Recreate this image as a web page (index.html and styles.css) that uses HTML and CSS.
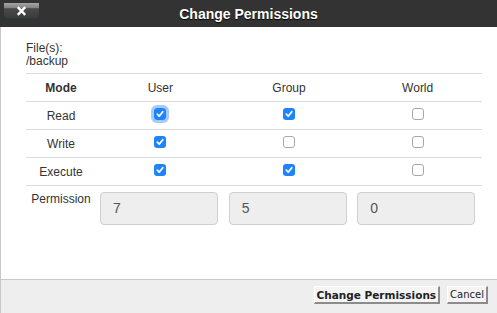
FILE: index.html
```html
<!DOCTYPE html>
<html lang="en">
<head>
<meta charset="utf-8">
<title>Change Permissions</title>
<link rel="stylesheet" href="styles.css">
</head>
<body>
<div class="dialog">
  <div class="titlebar">
    <button class="close" aria-label="Close">
      <svg width="11" height="10" viewBox="0 0 11 10"><path d="M1.8 1.2 L9.2 8.8 M9.2 1.2 L1.8 8.8" stroke="#fff" stroke-width="2.4" stroke-linecap="butt"/></svg>
    </button>
    <h1 class="title">Change Permissions</h1>
    <span></span>
  </div>
  <div class="frame">
    <div class="content">
      <div class="files">File(s):<br>/backup</div>
      <div class="grid">
        <div class="cell head mode">Mode</div>
        <div class="cell head">User</div>
        <div class="cell head">Group</div>
        <div class="cell head">World</div>

        <div class="cell label">Read</div>
        <div class="cell"><span class="cb focus" role="checkbox" aria-checked="true"><svg viewBox="0 0 12 12"><rect width="12" height="12" rx="3" fill="#1e84fb"/><path d="M3.3 6.2 L5.2 8.2 L8.8 3.7" stroke="#fff" stroke-width="1.7" fill="none" stroke-linecap="round" stroke-linejoin="round"/></svg></span></div>
        <div class="cell"><span class="cb" role="checkbox" aria-checked="true"><svg viewBox="0 0 12 12"><rect width="12" height="12" rx="3" fill="#1e84fb"/><path d="M3.3 6.2 L5.2 8.2 L8.8 3.7" stroke="#fff" stroke-width="1.7" fill="none" stroke-linecap="round" stroke-linejoin="round"/></svg></span></div>
        <div class="cell"><span class="cb" role="checkbox" aria-checked="false"><svg viewBox="0 0 12 12"><rect x=".5" y=".5" width="11" height="11" rx="2.5" fill="#fff" stroke="#a8a8a8"/></svg></span></div>

        <div class="cell label">Write</div>
        <div class="cell"><span class="cb" role="checkbox" aria-checked="true"><svg viewBox="0 0 12 12"><rect width="12" height="12" rx="3" fill="#1e84fb"/><path d="M3.3 6.2 L5.2 8.2 L8.8 3.7" stroke="#fff" stroke-width="1.7" fill="none" stroke-linecap="round" stroke-linejoin="round"/></svg></span></div>
        <div class="cell"><span class="cb" role="checkbox" aria-checked="false"><svg viewBox="0 0 12 12"><rect x=".5" y=".5" width="11" height="11" rx="2.5" fill="#fff" stroke="#a8a8a8"/></svg></span></div>
        <div class="cell"><span class="cb" role="checkbox" aria-checked="false"><svg viewBox="0 0 12 12"><rect x=".5" y=".5" width="11" height="11" rx="2.5" fill="#fff" stroke="#a8a8a8"/></svg></span></div>

        <div class="cell label">Execute</div>
        <div class="cell"><span class="cb" role="checkbox" aria-checked="true"><svg viewBox="0 0 12 12"><rect width="12" height="12" rx="3" fill="#1e84fb"/><path d="M3.3 6.2 L5.2 8.2 L8.8 3.7" stroke="#fff" stroke-width="1.7" fill="none" stroke-linecap="round" stroke-linejoin="round"/></svg></span></div>
        <div class="cell"><span class="cb" role="checkbox" aria-checked="true"><svg viewBox="0 0 12 12"><rect width="12" height="12" rx="3" fill="#1e84fb"/><path d="M3.3 6.2 L5.2 8.2 L8.8 3.7" stroke="#fff" stroke-width="1.7" fill="none" stroke-linecap="round" stroke-linejoin="round"/></svg></span></div>
        <div class="cell"><span class="cb" role="checkbox" aria-checked="false"><svg viewBox="0 0 12 12"><rect x=".5" y=".5" width="11" height="11" rx="2.5" fill="#fff" stroke="#a8a8a8"/></svg></span></div>

        <div class="perm-label">Permission</div>
        <div class="perm-cell"><div class="perm-box">7</div></div>
        <div class="perm-cell"><div class="perm-box">5</div></div>
        <div class="perm-cell"><div class="perm-box">0</div></div>
      </div>
    </div>
    <div class="footer">
      <button class="btn primary">Change Permissions</button>
      <button class="btn">Cancel</button>
    </div>
  </div>
</div>
</body>
</html>
```

FILE: styles.css
```css
html, body {
  margin: 0;
  padding: 0;
  background: #fff;
}
body {
  width: 497px;
  height: 313px;
  overflow: hidden;
  font-family: "Liberation Sans", Arial, sans-serif;
  font-size: 12px;
  color: #333;
}
.dialog {
  display: flex;
  flex-direction: column;
  height: 313px;
}
.titlebar {
  height: 27px;
  background: #333;
  display: grid;
  grid-template-columns: 1fr auto 1fr;
  align-items: start;
  flex: none;
}
.close {
  justify-self: start;
  margin: 3px 0 0 4px;
  width: 35px;
  height: 15px;
  padding: 0;
  border: 0;
  border-radius: 0 0 4px 4px;
  background: linear-gradient(#a4a4a4 0, #858585 30%, #4a4a4a 38%, #3b3b3b 100%);
  box-shadow: 0 1px 1px rgba(20, 70, 70, 0.6);
  display: flex;
  align-items: center;
  justify-content: center;
}
.close svg { display: block; }
.title {
  margin: 0;
  font-size: 14px;
  font-weight: bold;
  color: #fff;
  line-height: 28px;
  text-shadow: 0 1px 1px #000;
  white-space: nowrap;
}
.frame {
  flex: 1;
  display: flex;
  flex-direction: column;
  border-left: 1px solid #c8c8c8;
}
.content {
  flex: 1;
  padding: 0 15px 0 25px;
}
.files {
  padding: 15px 0 5px;
  line-height: 13px;
  border-bottom: 1px solid #dcdcdc;
}
.grid {
  display: grid;
  grid-template-columns: 70px 1fr 1fr 1fr;
}
.cell {
  height: 27px;
  border-bottom: 1px solid #dcdcdc;
  display: flex;
  justify-content: center;
  align-items: center;
}
.head.mode { font-weight: bold; }
.cb {
  display: block;
  width: 12px;
  height: 12px;
  margin-bottom: 4px;
  border-radius: 3px;
}
.cb svg { display: block; width: 12px; height: 12px; }
.cb.focus {
  box-shadow: 0 0 0 3px rgba(90, 160, 245, 0.55);
}
.perm-label {
  text-align: center;
  padding-top: 6px;
  line-height: 14px;
}
.perm-cell {
  padding: 6px 0 0 4px;
}
.perm-box {
  box-sizing: border-box;
  width: 118px;
  height: 33px;
  border: 1px solid #cfcfcf;
  border-radius: 4px;
  background: #eee;
  color: #555;
  font-size: 14px;
  line-height: 31px;
  padding-left: 12px;
}
.footer {
  flex: none;
  height: 27px;
  border-top: 1px solid #c8c8c8;
  background: #eee;
  display: flex;
  justify-content: flex-end;
  align-items: flex-start;
  gap: 7px;
  padding: 6px 9px 0 0;
}
.btn {
  height: 18px;
  box-sizing: border-box;
  margin: 0;
  padding: 0 2px;
  font-family: "DejaVu Sans", Verdana, sans-serif;
  font-size: 10px;
  line-height: 14px;
  color: #222;
  background: #f4f4f4;
  border-style: solid;
  border-width: 1px 2px 2px 1px;
  border-color: #fff #8c8c8c #8c8c8c #fff;
}
.btn.primary {
  font-weight: bold;
  font-size: 10.5px;
}
```
